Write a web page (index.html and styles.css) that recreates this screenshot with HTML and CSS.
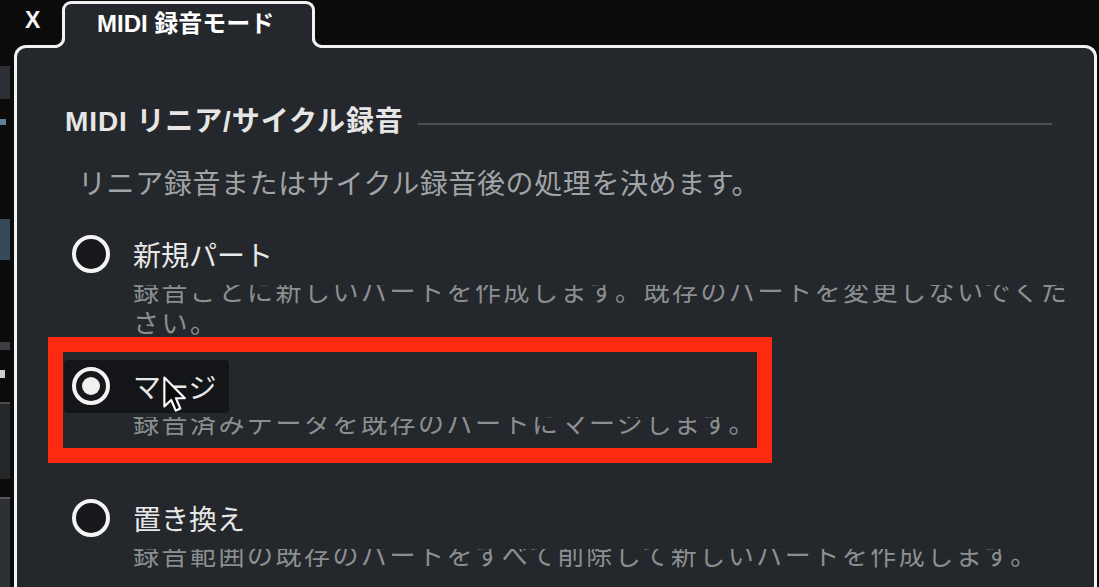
FILE: index.html
```html
<!DOCTYPE html>
<html lang="ja">
<head>
  <meta charset="UTF-8">
  <meta name="viewport" content="width=device-width, initial-scale=1.0">
  <title>MIDI 録音モード</title>
  <link rel="stylesheet" href="styles.css">
</head>
<body>

<div class="screen">
  <!-- edge of the project window behind the dialog -->
  <div class="sidebar">
    <span class="bit bit-a"></span>
    <span class="bit bit-b"></span>
    <span class="bit bit-c"></span>
    <span class="bit bit-d"></span>
    <span class="bit bit-e"></span>
    <span class="bit bit-f"></span>
    <span class="bit bit-g"></span>
  </div>

  <div class="dialog">
    <div class="tabs">
      <span class="close">X</span>
      <div class="tab">MIDI 録音モード</div>
    </div>

    <div class="panel">
      <div class="section-head">
        <h2>MIDI リニア/サイクル録音</h2>
        <span class="rule"></span>
      </div>
      <p class="intro">リニア録音またはサイクル録音後の処理を決めます。</p>

      <div class="options">
        <div class="option">
          <div class="option-head">
            <label class="choice">
              <span class="radio"></span>
              <span class="choice-name">新規パート</span>
            </label>
          </div>
          <p class="option-desc">録音ごとに新しいパートを作成します。既存のパートを変更しないでください。</p>
        </div>

        <div class="option is-marked">
          <span class="mark"></span>
          <div class="option-head">
            <label class="choice is-hover">
              <span class="radio is-on"></span>
              <span class="choice-name">マージ</span>
              <svg class="pointer" width="26" height="38" viewBox="0 0 17 25">
                <path d="M1.5 1 L1.5 20 L6 15.8 L9 22.8 L12 21.4 L9.1 14.6 L15 14.6 Z" fill="#0b0b0b" stroke="#ffffff" stroke-width="1.4" stroke-linejoin="round"/>
              </svg>
            </label>
          </div>
          <p class="option-desc">録音済みデータを既存のパートにマージします。</p>
        </div>

        <div class="option">
          <div class="option-head">
            <label class="choice">
              <span class="radio"></span>
              <span class="choice-name">置き換え</span>
            </label>
          </div>
          <p class="option-desc">録音範囲の既存のパートをすべて削除して新しいパートを作成します。</p>
        </div>
      </div>
    </div>
  </div>
</div>

</body>
</html>
```

FILE: styles.css
```css
/* General Styles */
body {
  margin: 0;
  background-color: #0b0b0c;
  overflow: hidden;
  font-family: "Liberation Sans", "Noto Sans CJK JP", sans-serif;
}
.screen {
  display: flex;
  height: 587px;
  overflow: hidden;
}

/* Window edge on the left */
.sidebar {
  width: 14px;
  flex: none;
  display: flex;
  flex-direction: column;
}
.bit {
  display: block;
  width: 10px;
}
.bit-a { height: 34px; margin-top: 66px; background-color: #2c3034; }
.bit-b { height: 6px; margin-top: 20px; width: 6px; background-color: #5c7f9c; }
.bit-c { height: 42px; margin-top: 94px; background-color: #34495a; }
.bit-d { height: 8px; margin-top: 82px; background-color: #3a3d41; }
.bit-e { height: 8px; margin-top: 20px; width: 5px; background-color: #c8cdd2; }
.bit-f { height: 76px; margin-top: 24px; background-color: #25282b; border-top: 2px solid #4a4d51; }
.bit-g { height: 90px; margin-top: 18px; background-color: #2e3134; border-top: 2px solid #55585c; }

/* Dialog frame */
.dialog {
  width: 1083px;
  flex: none;
  display: flex;
  flex-direction: column;
}
.tabs {
  height: 45px;
  flex: none;
  display: flex;
  align-items: flex-end;
}
.close {
  align-self: flex-start;
  box-sizing: border-box;
  width: 48px;
  padding: 8px 0 0 11px;
  color: #f4f4f4;
  font-size: 23px;
  font-weight: bold;
  line-height: 24px;
}
.tab {
  position: relative;
  z-index: 1;
  box-sizing: border-box;
  width: 253px;
  height: 47px;
  margin-bottom: -3px;
  padding-left: 32px;
  border: 3px solid #f2f2f2;
  border-bottom: 0;
  border-radius: 9px 9px 0 0;
  background-color: #24272b;
  color: #ffffff;
  font-size: 24px;
  font-weight: bold;
  line-height: 40px;
}
/* rounded joints where the tab meets the panel border */
.tab::before,
.tab::after {
  content: "";
  position: absolute;
  bottom: 0;
  width: 10px;
  height: 10px;
  border-bottom: 3px solid #f2f2f2;
}
.tab::before {
  left: -13px;
  border-right: 3px solid #f2f2f2;
  border-bottom-right-radius: 10px;
  box-shadow: 5px 5px 0 0 #24272b;
}
.tab::after {
  right: -13px;
  border-left: 3px solid #f2f2f2;
  border-bottom-left-radius: 10px;
  box-shadow: -5px 5px 0 0 #24272b;
}
.panel {
  flex: 1;
  min-height: 0;
  overflow: hidden;
  padding-top: 56px;
  border: 3px solid #f2f2f2;
  border-bottom: 0;
  border-radius: 12px 12px 0 0;
  background-color: #24272b;
}

/* Section header */
.section-head {
  display: flex;
  align-items: center;
  padding: 0 42px 0 48px;
}
.section-head h2 {
  margin: 0;
  color: #e6e6e6;
  font-size: 28px;
  font-weight: bold;
  line-height: 36px;
  letter-spacing: 0.9px;
}
.rule {
  flex: 1;
  height: 2px;
  margin: 4px 0 0 14px;
  background-color: #4d5155;
}
.intro {
  margin: 27px 0 0;
  padding-left: 61px;
  color: #a1a4a7;
  font-size: 28px;
  line-height: 36px;
  letter-spacing: 0.6px;
}

/* Radio options */
.options {
  margin-top: 20px;
  padding: 0 14px 0 47px;
}
.option {
  position: relative;
  min-height: 132px;
}
.option-head {
  position: relative;
  z-index: 1;
  height: 62px;
  display: flex;
  align-items: center;
  background-color: #24272b;
}
.choice {
  position: relative;
  display: flex;
  align-items: center;
  gap: 23px;
  height: 53px;
  padding: 0 13px 0 8px;
  border-radius: 4px;
  color: #e8e8e8;
  font-size: 28px;
}
.choice.is-hover {
  background-color: #131518;
}
.radio {
  box-sizing: border-box;
  width: 38px;
  height: 38px;
  display: grid;
  place-items: center;
  border: 4px solid #f4f4f4;
  border-radius: 50%;
  background-color: #16181b;
}
.radio.is-on::after {
  content: "";
  width: 18px;
  height: 18px;
  border-radius: 50%;
  background-color: #f0f0f0;
}
.pointer {
  position: absolute;
  left: 98px;
  top: 16px;
}
.option-desc {
  margin: -9px 0 0 69px;
  color: #8c8f92;
  font-size: 26px;
  line-height: 32px;
  letter-spacing: 2.5px;
}

/* red highlight frame */
.mark {
  position: absolute;
  z-index: 2;
  left: -16px;
  top: -18px;
  box-sizing: border-box;
  width: 724px;
  height: 126px;
  border: 15px solid #fe2a10;
}
```
